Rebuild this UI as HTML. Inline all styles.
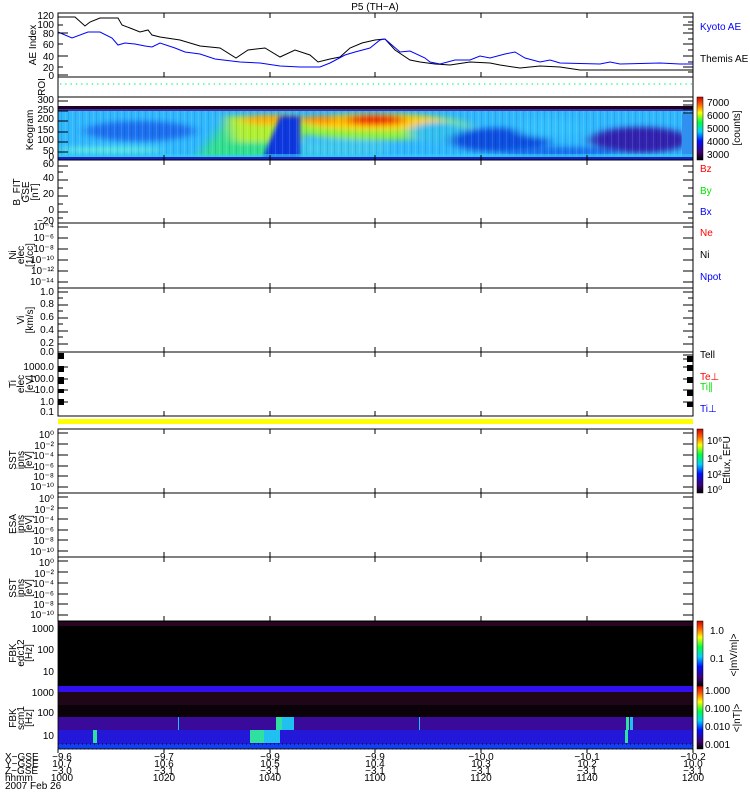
<!DOCTYPE html>
<html><head><meta charset="utf-8"><style>
html,body{margin:0;padding:0;background:#fff;width:750px;height:800px;overflow:hidden}
svg{display:block}
text{font-family:"Liberation Sans",sans-serif;font-size:10px;fill:#000}
</style></head><body>
<svg width="750" height="800" viewBox="0 0 750 800" xmlns="http://www.w3.org/2000/svg">
<defs>
<filter id="b4" filterUnits="userSpaceOnUse" x="0" y="80" width="750" height="100"><feGaussianBlur stdDeviation="6 3"/></filter>
<filter id="b2" filterUnits="userSpaceOnUse" x="0" y="80" width="750" height="100"><feGaussianBlur stdDeviation="2"/></filter>
<clipPath id="kc"><rect x="58" y="106" width="635" height="54"/></clipPath>
<pattern id="str" width="7" height="54" patternUnits="userSpaceOnUse" x="58" y="106">
<rect x="0" y="0" width="1" height="54" fill="#fff" opacity="0.12"/><rect x="3" y="0" width="1" height="54" fill="#000" opacity="0.1"/>
</pattern>
<linearGradient id="rb" x1="0" y1="1" x2="0" y2="0">
<stop offset="0" stop-color="#000"/><stop offset="0.12" stop-color="#400070"/><stop offset="0.3" stop-color="#0010ff"/><stop offset="0.45" stop-color="#00d0ff"/><stop offset="0.6" stop-color="#00ff40"/><stop offset="0.75" stop-color="#ffff00"/><stop offset="0.88" stop-color="#ff6000"/><stop offset="1" stop-color="#d00000"/>
</linearGradient>
</defs>

<text x="375" y="10" text-anchor="middle" font-size="11">P5 (TH−A)</text>

<!-- AE panel -->
<rect x="58" y="13" width="635" height="64" fill="none" stroke="#000"/>
<polyline fill="none" stroke="#000" stroke-width="1" points="58,17 75,17 85,26 90,22 100,18 118,18 122,25 130,28 140,32 148,30 152,35 160,37 180,40 200,46 220,48 236,58 248,50 265,48 280,57 295,50 310,55 318,62 330,59 340,57 350,48 362,43 375,40 385,39 395,50 410,60 420,62 435,64 450,65 470,62 490,63 500,65 520,68 540,66 560,67 580,70 600,70 620,70 693,70"/>
<polyline fill="none" stroke="#0000ff" stroke-width="1" points="58,32 72,38 88,32 100,32 112,38 118,45 125,43 135,44 145,46 152,47 160,43 175,48 185,52 200,54 215,59 240,62 260,63 280,66 300,67 320,67 330,63 345,55 355,52 370,48 380,40 385,39 400,52 410,51 425,58 430,62 440,64 455,60 470,60 480,56 490,58 505,54 515,52 525,58 540,62 550,60 560,63 600,64 610,62 620,64 660,63 680,64 693,64"/>
<g text-anchor="end"><text x="54" y="19">120</text><text x="54" y="28">100</text><text x="54" y="37">80</text><text x="54" y="48">60</text><text x="54" y="60">40</text><text x="54" y="71">20</text><text x="54" y="79">0</text></g>
<text transform="translate(36,45) rotate(-90)" text-anchor="middle">AE Index</text>
<text x="700" y="30" style="fill:#0000ff">Kyoto AE</text>
<text x="700" y="62">Themis AE</text>

<!-- ROI -->
<rect x="58" y="77" width="635" height="20" fill="none" stroke="#000"/>
<line x1="60" y1="84" x2="693" y2="84" stroke="#00ff88" stroke-width="1.3" stroke-dasharray="1.3,4"/>
<text transform="translate(45,87) rotate(-90)" text-anchor="middle">ROI</text>

<!-- Keogram -->
<g clip-path="url(#kc)">
<rect x="58" y="106" width="635" height="54" fill="#30b8ff"/>
<g filter="url(#b4)">
<ellipse cx="140" cy="131" rx="55" ry="10" fill="#1a70f0"/>
<ellipse cx="110" cy="150" rx="55" ry="3" fill="#60f0e0"/>
<polygon points="195,160 230,116 300,116 300,160" fill="#30e090"/>
<polygon points="225,116 300,116 300,142 235,142" fill="#b0f030"/>
<ellipse cx="270" cy="120" rx="30" ry="5" fill="#ffb000"/>
<ellipse cx="380" cy="127" rx="90" ry="13" fill="#90f040"/>
<ellipse cx="375" cy="122" rx="70" ry="8" fill="#ffd000"/>
<ellipse cx="375" cy="120" rx="30" ry="5" fill="#f02000"/>
<ellipse cx="320" cy="120" rx="20" ry="4" fill="#ff9000"/>
<ellipse cx="340" cy="148" rx="50" ry="8" fill="#40c8f0"/>
<ellipse cx="440" cy="132" rx="30" ry="10" fill="#30c0f0"/>
<ellipse cx="500" cy="140" rx="50" ry="12" fill="#1050e0"/>
<ellipse cx="550" cy="128" rx="35" ry="10" fill="#30c0ff"/>
<ellipse cx="640" cy="140" rx="50" ry="13" fill="#3020b0"/>
<ellipse cx="560" cy="152" rx="60" ry="5" fill="#1870f0"/>
</g>
<polygon points="262,160 280,116 300,116 300,160" fill="#0838e0" filter="url(#b2)"/>
<rect x="58" y="106" width="635" height="54" fill="url(#str)"/>
<rect x="682" y="114" width="11" height="46" fill="#3090f0"/>
<rect x="58" y="106" width="635" height="3" fill="#200020"/>
<rect x="58" y="109" width="635" height="2" fill="#4030a0"/>
<rect x="58" y="154" width="635" height="3" fill="#30d0f0" opacity="0.6"/>
<rect x="58" y="157" width="635" height="3" fill="#1820c0"/>
</g>
<rect x="58" y="97" width="635" height="63" fill="none" stroke="#000"/>
<g text-anchor="end"><text x="54" y="103">300</text><text x="54" y="113">250</text><text x="54" y="122">200</text><text x="54" y="133">150</text><text x="54" y="143">100</text><text x="54" y="154">50</text><text x="54" y="160">0</text></g>
<text transform="translate(33,130) rotate(-90)" text-anchor="middle">Keogram</text>
<rect x="697" y="97" width="6" height="63" fill="url(#rb)" stroke="#000" stroke-width="0.5"/>
<g font-size="9"><text x="707" y="106">7000</text><text x="707" y="119">6000</text><text x="707" y="132">5000</text><text x="707" y="145">4000</text><text x="707" y="158">3000</text></g>
<text transform="translate(740,128) rotate(-90)" text-anchor="middle" font-size="9">[counts]</text>

<!-- B -->
<rect x="58" y="160" width="635" height="63" fill="none" stroke="#000"/>
<g text-anchor="end"><text x="54" y="167">60</text><text x="54" y="181">40</text><text x="54" y="197">20</text><text x="54" y="213">0</text><text x="54" y="224">−20</text></g>
<text transform="translate(20,192) rotate(-90)" text-anchor="middle" font-size="9">B_FIT</text>
<text transform="translate(29,192) rotate(-90)" text-anchor="middle" font-size="8">GSE</text>
<text transform="translate(38,192) rotate(-90)" text-anchor="middle" font-size="9">[nT]</text>
<text x="700" y="172" style="fill:#ff0000">Bz</text>
<text x="700" y="194" style="fill:#00e000">By</text>
<text x="700" y="215" style="fill:#0000ff">Bx</text>

<!-- Ni -->
<rect x="58" y="223" width="635" height="65" fill="none" stroke="#000"/>
<g text-anchor="end" font-size="9"><text x="54" y="230">10⁻⁴</text><text x="54" y="241">10⁻⁶</text><text x="54" y="252">10⁻⁸</text><text x="54" y="263">10⁻¹⁰</text><text x="54" y="274">10⁻¹²</text><text x="54" y="285">10⁻¹⁴</text></g>
<text transform="translate(16,255) rotate(-90)" text-anchor="middle" font-size="9">Ni</text>
<text transform="translate(24,255) rotate(-90)" text-anchor="middle" font-size="8">elec</text>
<text transform="translate(33,255) rotate(-90)" text-anchor="middle" font-size="9">[1/cc]</text>
<text x="700" y="236" style="fill:#ff0000">Ne</text>
<text x="700" y="258">Ni</text>
<text x="700" y="280" style="fill:#0000ff">Npot</text>

<!-- Vi -->
<rect x="58" y="288" width="635" height="64" fill="none" stroke="#000"/>
<g text-anchor="end"><text x="54" y="295">1.0</text><text x="54" y="307">0.8</text><text x="54" y="320">0.6</text><text x="54" y="333">0.4</text><text x="54" y="346">0.2</text><text x="54" y="355">0.0</text></g>
<text transform="translate(24,320) rotate(-90)" text-anchor="middle" font-size="9">Vi</text>
<text transform="translate(33,320) rotate(-90)" text-anchor="middle" font-size="9">[km/s]</text>

<!-- Ti -->
<rect x="58" y="352" width="635" height="64" fill="none" stroke="#000"/>
<g fill="#000"><rect x="58" y="353" width="6" height="6"/><rect x="58" y="366" width="6" height="6"/><rect x="58" y="377" width="6" height="7"/><rect x="58" y="389" width="6" height="4"/><rect x="58" y="399" width="6" height="6"/>
<rect x="687" y="356" width="6" height="6"/><rect x="687" y="365" width="6" height="6"/><rect x="687" y="377" width="6" height="6"/><rect x="687" y="390" width="6" height="6"/><rect x="687" y="402" width="6" height="5"/></g>
<g text-anchor="end"><text x="54" y="370">1000.0</text><text x="54" y="382">100.0</text><text x="54" y="393">10.0</text><text x="54" y="405">1.0</text><text x="54" y="415">0.1</text></g>
<text transform="translate(16,384) rotate(-90)" text-anchor="middle" font-size="9">Ti</text>
<text transform="translate(24,384) rotate(-90)" text-anchor="middle" font-size="8">elec</text>
<text transform="translate(33,384) rotate(-90)" text-anchor="middle" font-size="9">[eV]</text>
<text x="700" y="358">Tell</text>
<text x="700" y="380" style="fill:#ff0000">Te⊥</text>
<text x="700" y="390" style="fill:#00e000">Ti∥</text>
<text x="700" y="412" style="fill:#0000ff">Ti⊥</text>

<!-- yellow bar -->
<line x1="58" y1="416" x2="693" y2="416" stroke="#000"/>
<rect x="58" y="419" width="635" height="5" fill="#ffff00"/>

<!-- SST / ESA / SST -->
<g fill="none" stroke="#000">
<rect x="58" y="429" width="635" height="64"/>
<rect x="58" y="493" width="635" height="64"/>
<rect x="58" y="557" width="635" height="64"/>
</g>
<g text-anchor="end" font-size="9">
<text x="54" y="438">10⁰</text><text x="54" y="449">10⁻²</text><text x="54" y="459">10⁻⁴</text><text x="54" y="470">10⁻⁶</text><text x="54" y="480">10⁻⁸</text><text x="54" y="490">10⁻¹⁰</text>
<text x="54" y="502">10⁰</text><text x="54" y="513">10⁻²</text><text x="54" y="523">10⁻⁴</text><text x="54" y="534">10⁻⁶</text><text x="54" y="544">10⁻⁸</text><text x="54" y="555">10⁻¹⁰</text>
<text x="54" y="566">10⁰</text><text x="54" y="577">10⁻²</text><text x="54" y="587">10⁻⁴</text><text x="54" y="598">10⁻⁶</text><text x="54" y="608">10⁻⁸</text><text x="54" y="618">10⁻¹⁰</text>
</g>
<g font-size="8" text-anchor="middle">
<text transform="translate(16,460) rotate(-90)">SST</text><text transform="translate(24,460) rotate(-90)">ipns</text><text transform="translate(32,460) rotate(-90)">[eV]</text>
<text transform="translate(16,524) rotate(-90)">ESA</text><text transform="translate(24,524) rotate(-90)">ipns</text><text transform="translate(32,524) rotate(-90)">[eV]</text>
<text transform="translate(16,588) rotate(-90)">SST</text><text transform="translate(24,588) rotate(-90)">ipns</text><text transform="translate(32,588) rotate(-90)">[eV]</text>
</g>
<rect x="697" y="429" width="6" height="64" fill="url(#rb)" stroke="#000" stroke-width="0.5"/>
<g font-size="9"><text x="707" y="444">10⁶</text><text x="707" y="462">10⁴</text><text x="707" y="478">10²</text><text x="707" y="493">10⁰</text></g>
<text transform="translate(730,460) rotate(-90)" text-anchor="middle" font-size="9">Eflux, EFU</text>

<!-- FBK edc12 -->
<rect x="58" y="621" width="635" height="65" fill="#000"/>
<rect x="58" y="622" width="635" height="4" fill="#2a0522"/>
<rect x="58" y="686" width="635" height="6" fill="#3010f0"/>
<g text-anchor="end"><text x="54" y="632">1000</text><text x="54" y="653">100</text><text x="54" y="675">10</text></g>
<g font-size="8" text-anchor="middle"><text transform="translate(16,653) rotate(-90)">FBK</text><text transform="translate(24,653) rotate(-90)">edc12</text><text transform="translate(32,653) rotate(-90)">[Hz]</text></g>
<rect x="697" y="621" width="6" height="65" fill="url(#rb)" stroke="#000" stroke-width="0.5"/>
<g font-size="9"><text x="710" y="634">1.0</text><text x="710" y="662">0.1</text></g>
<text transform="translate(737,655) rotate(-90)" text-anchor="middle" font-size="9">&lt;|mV/m|&gt;</text>

<!-- FBK scm -->
<rect x="58" y="692" width="635" height="13" fill="#200718"/>
<rect x="58" y="705" width="635" height="12" fill="#0a0208"/>
<rect x="58" y="717" width="635" height="13" fill="#3a0a9a"/>
<rect x="58" y="730" width="635" height="14" fill="#2418d8"/>
<rect x="58" y="744" width="635" height="5" fill="#1040f0"/>
<g fill="#30e0a0"><rect x="93" y="730" width="4" height="13"/><rect x="250" y="730" width="14" height="13"/><rect x="276" y="717" width="6" height="13"/><rect x="626" y="717" width="3" height="13"/><rect x="625" y="730" width="3" height="13"/></g>
<g fill="#20c0f0"><rect x="264" y="730" width="16" height="13"/><rect x="282" y="717" width="12" height="13"/><rect x="178" y="717" width="1" height="13"/><rect x="419" y="717" width="1" height="13"/><rect x="630" y="717" width="3" height="13"/></g>
<rect x="58" y="744" width="635" height="5" fill="none" stroke="#000" stroke-width="1" stroke-dasharray="1,3"/>
<rect x="58" y="621" width="635" height="128" fill="none" stroke="#000" stroke-width="0.8"/>
<g text-anchor="end"><text x="54" y="696">1000</text><text x="54" y="716">100</text><text x="54" y="739">10</text></g>
<g font-size="8" text-anchor="middle"><text transform="translate(16,718) rotate(-90)">FBK</text><text transform="translate(24,718) rotate(-90)">scm1</text><text transform="translate(32,718) rotate(-90)">[Hz]</text></g>
<rect x="697" y="686" width="6" height="63" fill="url(#rb)" stroke="#000" stroke-width="0.5"/>
<g font-size="9"><text x="705" y="694">1.000</text><text x="705" y="712">0.100</text><text x="705" y="730">0.010</text><text x="705" y="748">0.001</text></g>
<text transform="translate(740,718) rotate(-90)" text-anchor="middle" font-size="9">&lt;|nT|&gt;</text>

<!-- ticks -->
<g stroke="#000" stroke-width="1">
<path d="M164 13v5M270 13v5M375 13v5M481 13v5M587 13v5M164 77v-5M270 77v-5M375 77v-5M481 77v-5M587 77v-5
M164 160v-5M270 160v-5M375 160v-5M481 160v-5M587 160v-5M164 160v5M270 160v5M375 160v5M481 160v5M587 160v5
M164 223v-5M270 223v-5M375 223v-5M481 223v-5M587 223v-5M164 223v5M270 223v5M375 223v5M481 223v5M587 223v5
M164 288v-5M270 288v-5M375 288v-5M481 288v-5M587 288v-5M164 288v5M270 288v5M375 288v5M481 288v5M587 288v5
M164 352v-5M270 352v-5M375 352v-5M481 352v-5M587 352v-5M164 352v5M270 352v5M375 352v5M481 352v5M587 352v5
M164 416v-5M270 416v-5M375 416v-5M481 416v-5M587 416v-5
M164 429v5M270 429v5M375 429v5M481 429v5M587 429v5M164 493v-5M270 493v-5M375 493v-5M481 493v-5M587 493v-5
M164 493v5M270 493v5M375 493v5M481 493v5M587 493v5M164 557v-5M270 557v-5M375 557v-5M481 557v-5M587 557v-5
M164 557v5M270 557v5M375 557v5M481 557v5M587 557v5M164 621v-5M270 621v-5M375 621v-5M481 621v-5M587 621v-5
M58 17h10M58 25h5M58 33h10M58 44h5M58 56h10M58 67h5M58 75h10
M683 17h10M688 22h5M683 25h10M688 29h5M683 33h10M688 39h5M683 44h10M688 50h5M683 56h10M688 62h5M683 67h10M688 72h5
M58 101h10M58 111h10M58 121h10M58 132h10M58 142h10M58 152h10M683 101h10M683 105h10M683 109h10M683 113h10
M58 166h10M58 172h5M58 180h10M58 188h5M58 196h10M58 204h5M58 212h10M58 218h5
M683 166h10M688 172h5M683 180h10M688 188h5M683 196h10M688 204h5M683 212h10M688 218h5
M58 227h10M58 238h10M58 249h10M58 260h10M58 271h10M58 282h10M683 227h10M683 238h10M683 249h10M683 260h10M683 271h10M683 282h10
M58 292h10M58 298h5M58 305h10M58 311h5M58 318h10M58 324h5M58 331h10M58 337h5M58 344h10
M683 292h10M688 298h5M683 305h10M688 311h5M683 318h10M688 324h5M683 331h10M688 337h5M683 344h10
M58 367h10M58 379h10M58 390h10M58 402h10M683 355h10M683 359h10M683 367h10M683 379h10M683 390h10M683 402h10
M58 433h10M58 444h10M58 455h10M58 466h10M58 476h10M58 487h10M683 433h10M683 444h10M683 455h10M683 466h10M683 476h10M683 487h10
M58 497h10M58 508h10M58 519h10M58 530h10M58 540h10M58 551h10M683 497h10M683 508h10M683 519h10M683 530h10M683 540h10M683 551h10
M58 561h10M58 572h10M58 583h10M58 594h10M58 604h10M58 615h10M683 561h10M683 572h10M683 583h10M683 594h10M683 604h10M683 615h10
M58 749v4M164 749v4M270 749v4M375 749v4M481 749v4M587 749v4M693 749v4"/>
</g>

<!-- x labels -->
<g font-size="9">
<text x="5" y="760">X−GSE</text><text x="5" y="767">Y−GSE</text><text x="5" y="774">Z−GSE</text><text x="5" y="781">hhmm</text><text x="5" y="789">2007 Feb 26</text>
<g text-anchor="middle">
<text x="62" y="760">−9.6</text><text x="62" y="767">10.7</text><text x="62" y="774">−3.0</text><text x="62" y="781">1000</text>
<text x="164" y="760">−9.7</text><text x="164" y="767">10.6</text><text x="164" y="774">−3.1</text><text x="164" y="781">1020</text>
<text x="270" y="760">−9.9</text><text x="270" y="767">10.5</text><text x="270" y="774">−3.1</text><text x="270" y="781">1040</text>
<text x="375" y="760">−9.9</text><text x="375" y="767">10.4</text><text x="375" y="774">−3.1</text><text x="375" y="781">1100</text>
<text x="481" y="760">−10.0</text><text x="481" y="767">10.3</text><text x="481" y="774">−3.1</text><text x="481" y="781">1120</text>
<text x="587" y="760">−10.1</text><text x="587" y="767">10.2</text><text x="587" y="774">−3.1</text><text x="587" y="781">1140</text>
<text x="693" y="760">−10.2</text><text x="693" y="767">10.0</text><text x="693" y="774">−3.1</text><text x="693" y="781">1200</text>
</g></g>
</svg>
</body></html>
